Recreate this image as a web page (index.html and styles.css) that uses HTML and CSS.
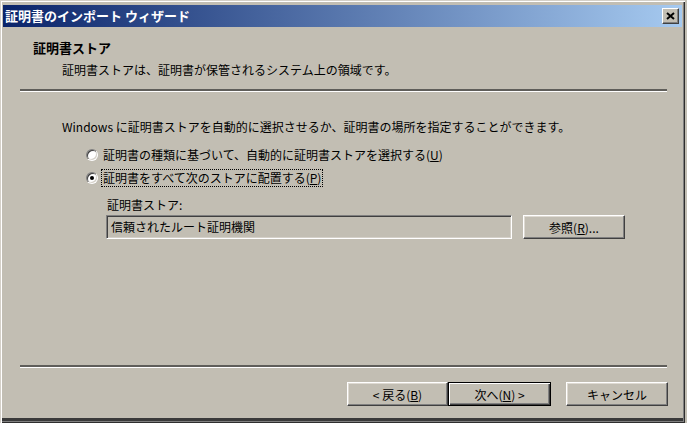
FILE: index.html
```html
<!DOCTYPE html>
<html lang="ja">
<head>
    <meta charset="UTF-8">
    <title>証明書のインポート ウィザード</title>
    <link rel="stylesheet" href="styles.css">
</head>
<body>
    <div class="window">
        <!-- Title bar -->
        <div class="titlebar">
            <span class="title">証明書のインポート ウィザード</span>
            <button class="close-btn" aria-label="閉じる">
                <svg width="9" height="8" viewBox="0 0 9 8">
                    <path d="M1 1l7 6M8 1L1 7" stroke="#000" stroke-width="2" fill="none"/>
                </svg>
            </button>
        </div>

        <!-- Page header -->
        <div class="header">
            <h1>証明書ストア</h1>
            <p class="subtitle">証明書ストアは、証明書が保管されるシステム上の領域です。</p>
        </div>
        <hr class="separator">

        <!-- Page body -->
        <div class="content">
            <p class="intro">Windows に証明書ストアを自動的に選択させるか、証明書の場所を指定することができます。</p>
            <div class="radio-row">
                <span class="radio"><span class="radio-inner"></span></span>
                <span class="radio-label">証明書の種類に基づいて、自動的に証明書ストアを選択する(<u>U</u>)</span>
            </div>
            <div class="radio-row">
                <span class="radio checked"><span class="radio-inner"></span></span>
                <span class="radio-label focused">証明書をすべて次のストアに配置する(<u>P</u>)</span>
            </div>
            <div class="store-label">証明書ストア:</div>
            <div class="store-row">
                <div class="field">信頼されたルート証明機関</div>
                <button class="btn browse-btn">参照(<u>R</u>)...</button>
            </div>
        </div>

        <!-- Wizard buttons -->
        <hr class="separator">
        <div class="footer">
            <button class="btn back-btn">&lt; 戻る(<u>B</u>)</button>
            <button class="btn next-btn default">次へ(<u>N</u>) &gt;</button>
            <button class="btn cancel-btn">キャンセル</button>
        </div>
    </div>
</body>
</html>
```

FILE: styles.css
```css
/* Classic wizard dialog */
* {
    box-sizing: border-box;
}

body {
    margin: 0;
    background: #c2beb3;
    font-family: "Noto Sans CJK JP", sans-serif;
    font-size: 12px;
    color: #000;
}

.window {
    width: 685px;
    height: 423px;
    display: flex;
    flex-direction: column;
    padding: 5px 3px 6px 3px;
    background: #c2beb3;
    box-shadow: inset 1px 1px #d4d0c8, inset 2px 2px #fff,
        inset -1px -1px #2e2e2e, inset -2px -2px #808080,
        inset 0 -5px #3a3a3a;
}

.titlebar {
    height: 22px;
    display: flex;
    align-items: center;
    justify-content: space-between;
    padding: 0 3px 0 2px;
    background: linear-gradient(to right, #0a246a, #a6caf0);
}

.title {
    color: #fff;
    font-weight: bold;
    font-size: 13px;
    line-height: 16px;
}

.close-btn {
    width: 17px;
    height: 16px;
    padding: 0;
    display: flex;
    align-items: center;
    justify-content: center;
    background: #c2beb3;
    border: 1px solid;
    border-color: #fff #404040 #404040 #fff;
    box-shadow: inset -1px -1px #808080;
}

.header {
    padding: 13px 0 0 30px;
}

h1 {
    margin: 0;
    font-size: 13px;
    font-weight: bold;
    line-height: 16px;
}

.subtitle {
    margin: 6px 0 0 29px;
    line-height: 16px;
}

.separator {
    height: 0;
    margin: 11px 15px 0 17px;
    border: 0;
    border-top: 2px solid #5f5e5a;
    border-bottom: 1px solid #fff;
}

.content {
    flex: 1;
}

.intro {
    margin: 27px 0 0 59px;
    line-height: 16px;
}

.radio-row {
    display: flex;
    align-items: center;
    height: 18px;
    margin: 11px 0 0 83px;
    gap: 3px;
}

.radio-row + .radio-row {
    margin-top: 5px;
}

.radio {
    width: 12px;
    height: 12px;
    border-radius: 50%;
    padding: 1px;
    background: linear-gradient(135deg, #808080 50%, #fff 50%);
}

.radio-inner {
    display: flex;
    align-items: center;
    justify-content: center;
    width: 10px;
    height: 10px;
    border-radius: 50%;
    background: #fff;
    box-shadow: inset 1px 1px #404040, inset -1px -1px #d4d0c8;
}

.radio.checked .radio-inner::after {
    content: "";
    width: 4px;
    height: 4px;
    border-radius: 50%;
    background: #000;
}

.radio-label {
    padding: 0 1px;
    border: 1px dotted transparent;
    line-height: 16px;
}

.radio-label.focused {
    border-color: #000;
}

.store-label {
    margin: 10px 0 0 104px;
    line-height: 16px;
}

.store-row {
    display: flex;
    margin: 2px 0 0 103px;
    gap: 11px;
}

.field {
    width: 406px;
    height: 24px;
    padding: 3px 0 0 4px;
    line-height: 16px;
    border: 1px solid;
    border-color: #808080 #fff #fff #808080;
    box-shadow: inset 1px 1px #404040, inset -1px -1px #d4d0c8;
}

.btn {
    height: 24px;
    padding: 0;
    font-family: inherit;
    font-size: 12px;
    color: #000;
    background: #c2beb3;
    border: 1px solid;
    border-color: #fff #404040 #404040 #fff;
    box-shadow: inset -1px -1px #808080, inset 1px 1px #dedad2;
}

.browse-btn {
    width: 102px;
}

.footer {
    display: flex;
    justify-content: flex-end;
    padding: 14px 14px 11px 0;
}

.back-btn {
    width: 101px;
}

.next-btn {
    width: 103px;
}

.btn.default {
    border-color: #000;
    box-shadow: inset 1px 1px #fff, inset -1px -1px #404040, inset -2px -2px #808080;
}

.cancel-btn {
    width: 102px;
    margin-left: 15px;
}
```
